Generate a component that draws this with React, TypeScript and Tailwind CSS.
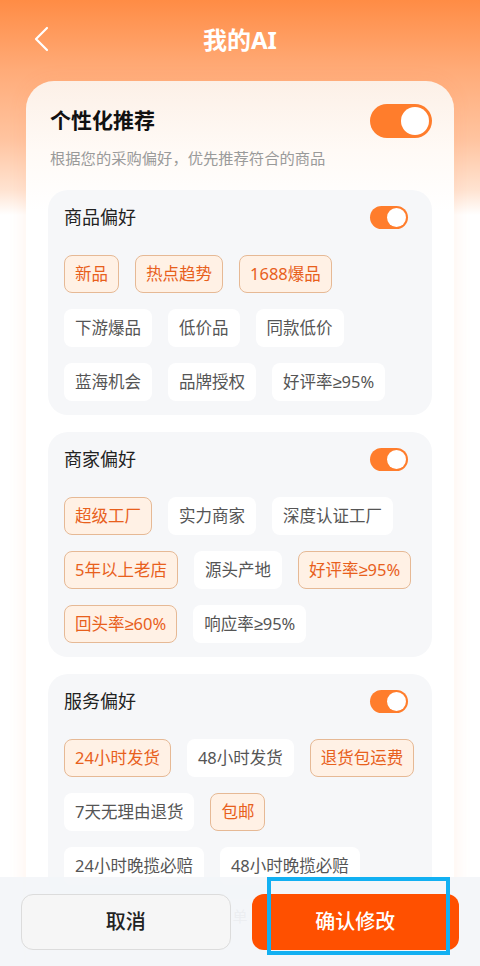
import React, { useState } from "react";

type Chip = { label: string; on: boolean };
type Group = { title: string; chips: Chip[] };

const groups: Group[] = [
  {
    title: "商品偏好",
    chips: [
      { label: "新品", on: true },
      { label: "热点趋势", on: true },
      { label: "1688爆品", on: true },
      { label: "下游爆品", on: false },
      { label: "低价品", on: false },
      { label: "同款低价", on: false },
      { label: "蓝海机会", on: false },
      { label: "品牌授权", on: false },
      { label: "好评率≥95%", on: false },
    ],
  },
  {
    title: "商家偏好",
    chips: [
      { label: "超级工厂", on: true },
      { label: "实力商家", on: false },
      { label: "深度认证工厂", on: false },
      { label: "5年以上老店", on: true },
      { label: "源头产地", on: false },
      { label: "好评率≥95%", on: true },
      { label: "回头率≥60%", on: true },
      { label: "响应率≥95%", on: false },
    ],
  },
  {
    title: "服务偏好",
    chips: [
      { label: "24小时发货", on: true },
      { label: "48小时发货", on: false },
      { label: "退货包运费", on: true },
      { label: "7天无理由退货", on: false },
      { label: "包邮", on: true },
      { label: "24小时晚揽必赔", on: false },
      { label: "48小时晚揽必赔", on: false },
    ],
  },
];

function BigSwitch() {
  return (
    <div className="w-[62px] h-[34px] rounded-full bg-[#ff7d2c] flex items-center justify-end pr-[3px]">
      <div className="w-[28px] h-[28px] rounded-full bg-white" />
    </div>
  );
}

function SmallSwitch() {
  return (
    <div className="w-[38px] h-[23px] rounded-full bg-[#ff7d2c] flex items-center justify-end pr-[2px]">
      <div className="w-[19px] h-[19px] rounded-full bg-white" />
    </div>
  );
}

function PrefGroup({ group }: { group: Group }) {
  const [chips, setChips] = useState(group.chips);
  return (
    <div className="rounded-[20px] bg-[#f6f7f9] pl-4 pr-4 pt-4 pb-[14px]">
      <div className="flex items-center justify-between pr-[8px]">
        <span className="text-[18px] leading-[23px] text-[#222]">{group.title}</span>
        <SmallSwitch />
      </div>
      <div className="mt-[26px] flex flex-wrap gap-x-4 gap-y-4">
        {chips.map((c, i) => (
          <button
            key={c.label + i}
            onClick={() =>
              setChips((prev) => prev.map((p, j) => (j === i ? { ...p, on: !p.on } : p)))
            }
            className={
              c.on
                ? "h-[38px] px-[10px] rounded-[8px] border border-[#e6b995] bg-[#fff1e5] text-[16.5px] text-[#e8601c] flex items-center whitespace-nowrap"
                : "h-[38px] px-[10px] rounded-[8px] border border-transparent bg-white text-[16.5px] text-[#555] flex items-center whitespace-nowrap"
            }
          >
            {c.label}
          </button>
        ))}
      </div>
    </div>
  );
}

export default function App() {
  return (
    <div
      className="relative w-[480px] h-[966px] overflow-hidden bg-[linear-gradient(180deg,#ff8c45_0px,#ffab78_70px,#ffc4a0_140px,#ffe3d1_190px,#ffffff_215px)]"
      style={{
        fontFamily:
          '"Noto Sans", "Liberation Sans", "DejaVu Sans", "Noto Sans CJK SC", sans-serif',
      }}
    >
      {/* top bar */}
      <div className="relative h-[81px] flex items-center justify-center">
        <svg
          className="absolute left-[33px] top-[26px]"
          width="18"
          height="26"
          viewBox="0 0 18 26"
          fill="none"
        >
          <polyline
            points="14,2 3,13 14,24"
            stroke="#ffffff"
            strokeWidth="2.2"
            strokeLinecap="round"
            strokeLinejoin="round"
          />
        </svg>
        <span className="text-[24px] font-bold text-white -mt-[2px]">我的AI</span>
      </div>

      {/* settings card */}
      <div className="mx-[26px] rounded-[28px] bg-[linear-gradient(180deg,#fcf0e7_0px,#fffaf6_70px,#ffffff_130px)] px-[22px] pt-[23px] pb-[60px] shadow-[0_0_18px_rgba(255,140,70,0.12)]">
        <div className="flex items-center justify-between pl-[2px]">
          <span className="text-[21px] font-bold text-[#111]">个性化推荐</span>
          <BigSwitch />
        </div>
        <p className="mt-[9px] pl-[2px] text-[15.3px] leading-[22px] text-[#9a9a9a]">
          根据您的采购偏好，优先推荐符合的商品
        </p>
        <div className="mt-[21px] flex flex-col gap-[17px]">
          {groups.map((g) => (
            <PrefGroup key={g.title} group={g} />
          ))}
        </div>
        <p className="mt-[6px] text-center text-[15px] leading-[22px] text-[#a9a9a9]">单</p>
      </div>

      {/* action bar */}
      <div className="absolute left-0 right-0 bottom-0 h-[89px] bg-[rgba(243,245,248,0.9)] flex gap-[21px] px-[21px] pt-[17px]">
        <button className="flex-1 h-[56px] rounded-[12px] bg-[#f6f6f6] border border-[#dcdcdc] text-[20px] font-medium text-[#222]">
          取消
        </button>
        <button className="flex-1 h-[56px] rounded-[12px] bg-[#ff5000] text-[20px] font-medium text-white">
          确认修改
        </button>
      </div>

      {/* focus outline on the primary action */}
      <div className="absolute left-[267px] top-[877px] w-[183px] h-[78px] border-[4px] border-[#12b0f2] pointer-events-none" />
    </div>
  );
}
